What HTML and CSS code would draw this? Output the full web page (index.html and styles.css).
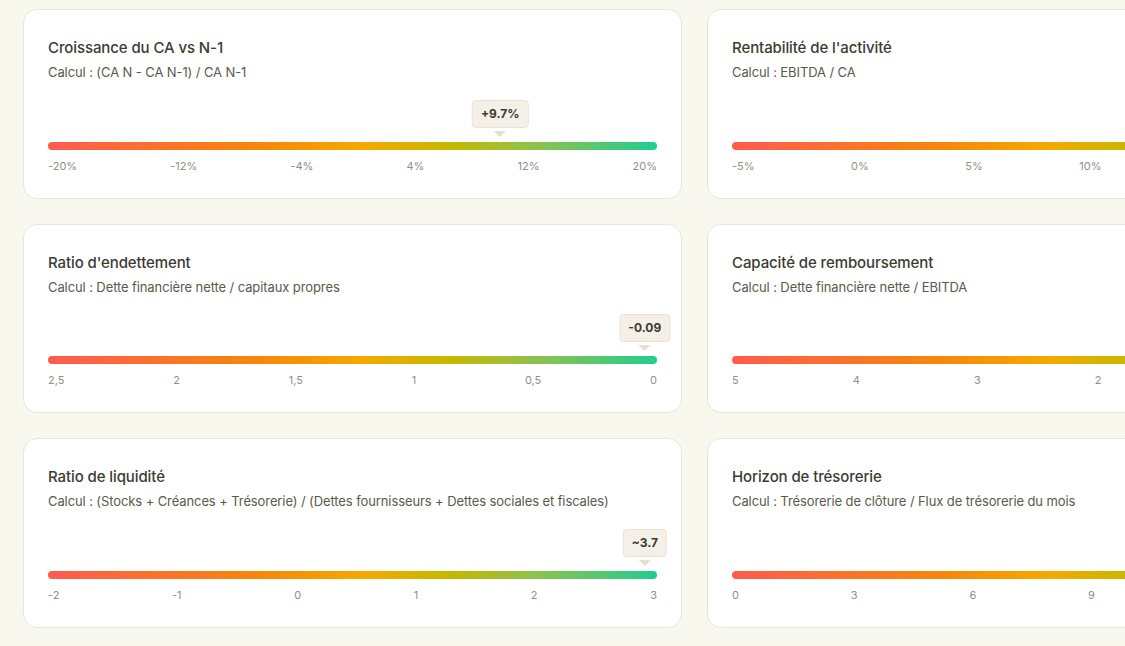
FILE: index.html
```html
<!DOCTYPE html>
<html lang="fr">
<head>
<meta charset="utf-8">
<title>Indicateurs</title>
<link rel="stylesheet" href="styles.css">
</head>
<body>
<main class="grid">
  <section class="card">
    <h2 class="title">Croissance du CA vs N-1</h2>
    <p class="formula">Calcul : (CA N - CA N-1) / CA N-1</p>
    <div class="gauge">
      <div class="bar">
        <div class="tip" style="left: 74.25%"><span class="tip-box">+9.7%</span></div>
      </div>
      <div class="ticks"><span>-20%</span><span>-12%</span><span>-4%</span><span>4%</span><span>12%</span><span>20%</span></div>
    </div>
  </section>
  <section class="card">
    <h2 class="title">Rentabilité de l'activité</h2>
    <p class="formula">Calcul : EBITDA / CA</p>
    <div class="gauge">
      <div class="bar"></div>
      <div class="ticks"><span>-5%</span><span>0%</span><span>5%</span><span>10%</span><span>15%</span><span>20%</span></div>
    </div>
  </section>
  <section class="card">
    <h2 class="title">Ratio d'endettement</h2>
    <p class="formula">Calcul : Dette financière nette / capitaux propres</p>
    <div class="gauge">
      <div class="bar">
        <div class="tip" style="left: 98%"><span class="tip-box">-0.09</span></div>
      </div>
      <div class="ticks"><span>2,5</span><span>2</span><span>1,5</span><span>1</span><span>0,5</span><span>0</span></div>
    </div>
  </section>
  <section class="card">
    <h2 class="title">Capacité de remboursement</h2>
    <p class="formula">Calcul : Dette financière nette / EBITDA</p>
    <div class="gauge">
      <div class="bar"></div>
      <div class="ticks"><span>5</span><span>4</span><span>3</span><span>2</span><span>1</span><span>0</span></div>
    </div>
  </section>
  <section class="card">
    <h2 class="title">Ratio de liquidité</h2>
    <p class="formula">Calcul : (Stocks + Créances + Trésorerie) / (Dettes fournisseurs + Dettes sociales et fiscales)</p>
    <div class="gauge">
      <div class="bar">
        <div class="tip" style="left: 98%"><span class="tip-box">~3.7</span></div>
      </div>
      <div class="ticks"><span>-2</span><span>-1</span><span>0</span><span>1</span><span>2</span><span>3</span></div>
    </div>
  </section>
  <section class="card">
    <h2 class="title">Horizon de trésorerie</h2>
    <p class="formula">Calcul : Trésorerie de clôture / Flux de trésorerie du mois</p>
    <div class="gauge">
      <div class="bar"></div>
      <div class="ticks"><span>0</span><span>3</span><span>6</span><span>9</span><span>12</span><span>15</span></div>
    </div>
  </section>
</main>
</body>
</html>
```

FILE: styles.css
```css
html, body {
  margin: 0;
  padding: 0;
  background: #f9f8ef;
  overflow: hidden;
}

body {
  font-family: "Inter", "Liberation Sans", sans-serif;
  color: #3b3b31;
  padding: 9px 0 0 23px;
}

.grid {
  display: grid;
  grid-template-columns: 659px 659px;
  column-gap: 25px;
  row-gap: 25px;
  width: 1343px;
}

.card {
  background: #ffffff;
  border: 1px solid #e9e6d7;
  border-radius: 14px;
  padding: 26px 24px 24px 24px;
  box-sizing: border-box;
  height: 189.5px;
  display: flex;
  flex-direction: column;
}

.title {
  margin: 0;
  font-size: 15px;
  line-height: 24px;
  font-weight: 500;
  color: #3b3b31;
  letter-spacing: -0.1px;
}

.formula {
  margin: 2px 0 0 0;
  font-size: 13px;
  line-height: 20px;
  color: #5a5a4b;
  letter-spacing: -0.1px;
}

.gauge {
  margin-top: auto;
}

.bar {
  position: relative;
  height: 8px;
  border-radius: 4px;
  background: linear-gradient(90deg, #ff5b4f 0%, #f6860b 34%, #f5a900 52%, #c5b800 66%, #8ec24c 80%, #20cd92 100%);
}

.tip {
  position: absolute;
  bottom: 13px;
  transform: translateX(-50%);
  display: flex;
  flex-direction: column;
  align-items: center;
}

.tip::after {
  content: "";
  display: block;
  width: 0;
  height: 0;
  margin-top: 3px;
  border-left: 6px solid transparent;
  border-right: 6px solid transparent;
  border-top: 6px solid #e6dfd0;
}

.tip-box {
  display: block;
  background: #f5f0e7;
  border: 1px solid #e9e2d2;
  border-radius: 4px;
  padding: 5px 8px 6px;
  font-size: 12px;
  line-height: 15px;
  font-weight: 700;
  color: #3b3b31;
  white-space: nowrap;
}

.ticks {
  display: flex;
  justify-content: space-between;
  margin-top: 8px;
  font-size: 11px;
  line-height: 16px;
  color: #958e82;
}
```
